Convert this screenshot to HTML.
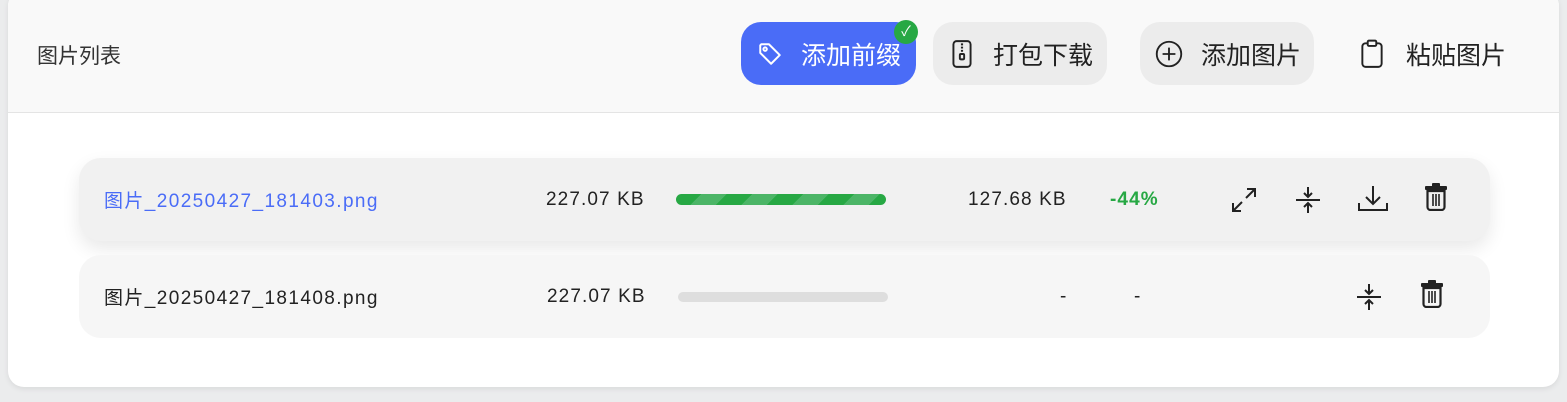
<!DOCTYPE html>
<html><head><meta charset="utf-8"><style>
*{box-sizing:border-box;margin:0;padding:0}
body{width:1567px;height:402px;background:#ebeced;font-family:"Liberation Sans","Noto Sans CJK SC",sans-serif;position:relative;overflow:hidden;color:#222}
.card{position:absolute;left:8px;top:-10px;width:1551px;height:397px;background:#fff;border-radius:16px;box-shadow:0 2px 6px rgba(0,0,0,.08);overflow:hidden}
.hdr{position:absolute;left:0;top:0;width:100%;height:123px;background:#f9f9f9;border-bottom:1px solid #e4e4e4}
.title{position:absolute;left:29px;top:50px;font-size:21px;color:#333}
.btn{position:absolute;top:32px;height:63px;border-radius:20px;background:#ececec;font-size:25px;display:flex;align-items:center;color:#222}
.btn svg{margin-right:18px}
.row{position:absolute;left:71px;width:1411px;height:83px;border-radius:22px;font-size:19px;letter-spacing:1.1px}
.row span{position:absolute;top:28px}
.row span.n{top:31px}
.bar{position:absolute;height:11px;border-radius:6px}
</style></head><body>
<div class="card">
<div class="hdr">
<div class="title">图片列表</div>
<div class="btn" style="left:733px;width:175px;background:#4a6cf7;color:#fff;padding-left:16px">
<svg width="26" height="26" viewBox="0 0 24 24" fill="none" stroke="#fff" stroke-width="1.8" stroke-linejoin="round"><path d="M3 4v7l10 10 8-8L11 3H4z"/><circle cx="7.5" cy="7.5" r="1.6"/></svg>添加前缀
<div style="position:absolute;right:-2px;top:-2px;width:24px;height:24px;border-radius:50%;background:#27a844;color:#fff;font-size:14px;text-align:center;line-height:22px">✓</div></div>
<div class="btn" style="left:925px;width:174px;padding-left:16px">
<svg width="26" height="30" viewBox="0 0 24 28" fill="none" stroke="#222" stroke-width="1.8"><rect x="4" y="2" width="16" height="24" rx="3"/><path d="M11 5h2M11 8h2M11 11h2" /><rect x="10" y="14" width="4" height="5" rx="1"/></svg>打包下载</div>
<div class="btn" style="left:1132px;width:174px;padding-left:15px">
<svg width="28" height="28" viewBox="0 0 24 24" fill="none" stroke="#222" stroke-width="1.6"><circle cx="12" cy="12" r="10.5"/><path d="M12 6.5v11M6.5 12h11"/></svg>添加图片</div>
<div class="btn" style="left:1337px;width:175px;background:none;padding-left:14px">
<svg width="26" height="30" viewBox="0 0 22 28" fill="none" stroke="#222" stroke-width="1.8" style="margin-right:21px"><rect x="2" y="4" width="18" height="22" rx="3"/><rect x="7" y="1.5" width="8" height="5" rx="1.2" fill="#f9f9f9"/></svg>粘贴图片</div>
</div>
<div class="row" style="top:168px;background:#f1f1f1;box-shadow:0 8px 18px rgba(0,0,0,.09)">
<span style="left:25px;color:#4a6cf7;letter-spacing:1.4px">图片_20250427_181403.png</span>
<span class="n" style="left:467px">227.07 KB</span>
<div class="bar" style="left:597px;top:36px;width:210px;background:repeating-linear-gradient(135deg,#27a844 0 18px,#4cb567 18px 36px)"></div>
<span class="n" style="left:889px">127.68 KB</span>
<span class="n" style="left:1031px;color:#27a844;font-weight:bold">-44%</span>
<svg style="position:absolute;left:1149px;top:26px" width="32" height="32" viewBox="0 0 32 32" fill="none" stroke="#222" stroke-width="2"><path d="M19 5h8v8M27 5l-9 9M13 27H5v-8M5 27l9-9"/></svg>
<svg style="position:absolute;left:1215px;top:26px" width="28" height="32" viewBox="0 0 28 32" fill="none" stroke="#222" stroke-width="2"><path d="M2 16h24M14 3v10M10 9l4 4 4-4M14 29V19M10 23l4-4 4 4"/></svg>
<svg style="position:absolute;left:1278px;top:26px" width="32" height="30" viewBox="0 0 32 30" fill="none" stroke="#222" stroke-width="2"><path d="M16 2v18M9 13l7 7 7-7M2 19v7h28v-7"/></svg>
<svg style="position:absolute;left:1345px;top:25px" width="24" height="28" viewBox="0 0 24 28"><rect x="1" y="3" width="22" height="4" rx="1" fill="#222"/><rect x="8" y="0" width="8" height="4" rx="1" fill="#222"/><path d="M3.5 8h17v16a3 3 0 0 1-3 3h-11a3 3 0 0 1-3-3z" fill="none" stroke="#222" stroke-width="2.2"/><path d="M9 11v12M12 11v12M15 11v12" stroke="#222" stroke-width="1.6"/></svg>
</div>
<div class="row" style="top:265px;background:#f6f6f6">
<span style="left:25px;letter-spacing:1.4px">图片_20250427_181408.png</span>
<span class="n" style="left:468px">227.07 KB</span>
<div class="bar" style="left:599px;top:37px;width:210px;background:#dedede;height:10px"></div>
<span class="n" style="left:981px">-</span>
<span class="n" style="left:1055px">-</span>
<svg style="position:absolute;left:1276px;top:26px" width="28" height="32" viewBox="0 0 28 32" fill="none" stroke="#222" stroke-width="2"><path d="M2 16h24M14 3v10M10 9l4 4 4-4M14 29V19M10 23l4-4 4 4"/></svg>
<svg style="position:absolute;left:1341px;top:25px" width="24" height="28" viewBox="0 0 24 28"><rect x="1" y="3" width="22" height="4" rx="1" fill="#222"/><rect x="8" y="0" width="8" height="4" rx="1" fill="#222"/><path d="M3.5 8h17v16a3 3 0 0 1-3 3h-11a3 3 0 0 1-3-3z" fill="none" stroke="#222" stroke-width="2.2"/><path d="M9 11v12M12 11v12M15 11v12" stroke="#222" stroke-width="1.6"/></svg>
</div>
</div>
</body></html>
